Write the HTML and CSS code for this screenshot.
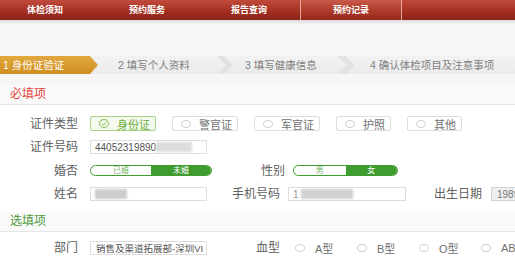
FILE: index.html
```html
<!DOCTYPE html>
<html>
<head>
  <title>预约记录</title>
  <link rel="stylesheet" href="styles.css">
</head>

<body>
  <div class="nav">
    <div class="nav-tabs">
      <a class="tab">体检须知</a>
      <a class="tab">预约服务</a>
      <a class="tab">报告查询</a>
      <a class="tab active">预约记录</a>
    </div>
  </div>
  <div class="nav-shade"></div>

  <div class="steps-wrap">
    <div class="steps">
      <div class="step step-current">1 身份证验证</div>
      <div class="step step-2">2 填写个人资料</div>
      <svg class="chevron" width="16" height="18" viewBox="0 0 16 18"><polygon points="0,0 7,0 16,9 7,18 0,18 9,9" fill="#e2e2e2"/></svg>
      <div class="step step-3">3 填写健康信息</div>
      <svg class="chevron" width="18" height="18" viewBox="0 0 18 18"><polygon points="0,0 8,0 18,9 8,18 0,18 10,9" fill="#e2e2e2"/></svg>
      <div class="step step-4">4 确认体检项目及注意事项</div>
    </div>
  </div>

  <div class="section-head required">必填项</div>
  <div class="form">
    <div class="row">
      <span class="lbl">证件类型</span>
      <div class="choices">
        <span class="choice checked">
          <svg class="icon" width="10" height="9" viewBox="0 0 10 9"><ellipse cx="5" cy="4.5" rx="4.5" ry="4" fill="none" stroke="#80bb50"/><path d="M2.8 4.6l1.7 1.5 2.7-3" fill="none" stroke="#80bb50"/></svg>身份证
        </span>
        <span class="choice"><i class="dot"></i>警官证</span>
        <span class="choice"><i class="dot"></i>军官证</span>
        <span class="choice"><i class="dot"></i>护照</span>
        <span class="choice"><i class="dot"></i>其他</span>
      </div>
    </div>
    <div class="row">
      <span class="lbl">证件号码</span>
      <div class="box box-std">44052319890<span class="blur blur-id"></span></div>
    </div>
    <div class="row">
      <span class="lbl">婚否</span>
      <div class="toggle toggle-wide"><span>已婚</span><span class="on">未婚</span></div>
      <span class="lbl lbl-mid">性别</span>
      <div class="toggle toggle-narrow"><span>男</span><span class="on">女</span></div>
    </div>
    <div class="row">
      <span class="lbl">姓名</span>
      <div class="box box-std"><span class="blur blur-name"></span></div>
      <span class="lbl lbl-mid">手机号码</span>
      <div class="box box-phone">1<span class="blur blur-phone"></span></div>
      <span class="lbl lbl-end">出生日期</span>
      <div class="box box-date">1989</div>
    </div>
  </div>

  <div class="section-head optional">选填项</div>
  <div class="form form-extra">
    <div class="row">
      <span class="lbl">部门</span>
      <div class="box box-std box-dept">销售及渠道拓展部-深圳VI</div>
      <span class="lbl lbl-mid">血型</span>
      <div class="radios">
        <span class="radio"><i class="dot"></i>A型</span>
        <span class="radio"><i class="dot"></i>B型</span>
        <span class="radio"><i class="dot"></i>O型</span>
        <span class="radio"><i class="dot"></i>AB</span>
      </div>
    </div>
  </div>
</body>
</html>
```

FILE: styles.css
```css
* {
  box-sizing: border-box;
}

html,
body {
  overflow: hidden;
}

body {
  margin: 0;
  width: 515px;
  background: #fff;
  font-family: "Liberation Sans", "Noto Sans CJK SC", sans-serif;
  color: #555;
}

.nav {
  height: 20px;
  background: linear-gradient(#c04a3c, #a52f21 55%, #8b2417);
  overflow: hidden;
}

.nav-tabs {
  display: flex;
  margin-left: -6px;
}

.tab {
  flex: none;
  width: 102px;
  height: 20px;
  line-height: 20px;
  text-align: center;
  font-size: 9px;
  font-weight: bold;
  color: #fff;
}

.tab.active {
  background: linear-gradient(#c95a4c, #ab3728 60%, #922a1c);
  border-left: 1px solid #e2a69d;
  border-right: 1px solid #e2a69d;
}

.nav-shade {
  height: 4px;
  background: linear-gradient(#dadada, #f3f3f3);
}

.steps-wrap {
  padding: 32px 0 11px;
  background: #f6f6f6;
}

.steps {
  display: flex;
  align-items: center;
  height: 18px;
  font-size: 10.5px;
  line-height: 18px;
  color: #808080;
  background: linear-gradient(#f2f2f2, #ebebeb);
}

.step {
  flex: none;
  white-space: nowrap;
}

.step-current {
  width: 98px;
  padding-left: 3px;
  color: #fff;
  background: linear-gradient(#e2a83e, #cf8f21);
  clip-path: polygon(0 0, 90px 0, 98px 50%, 90px 100%, 0 100%);
}

.step-2 {
  width: 99px;
  margin-left: 20px;
}

.step-3 {
  width: 92px;
  margin-left: 12px;
}

.step-4 {
  margin-left: 15px;
}

.chevron {
  flex: none;
  display: block;
}

.section-head {
  height: 20px;
  padding-left: 10px;
  line-height: 19px;
  font-size: 12px;
  background: #fafafa;
  border-bottom: 1px solid #e6e6e6;
}

.required {
  color: #e2443b;
}

.optional {
  color: #4c9b3a;
}

.form {
  padding: 7px 0 6px;
}

.form-extra {
  padding: 4px 0 0;
}

.row {
  display: flex;
  align-items: center;
  height: 23.5px;
  white-space: nowrap;
}

.row > * {
  flex: none;
}

.lbl {
  width: 78px;
  margin-right: 12px;
  text-align: right;
  font-size: 12px;
  line-height: 14px;
  color: #606060;
}

.lbl-mid {
  width: 73px;
  margin-right: 8px;
}

.lbl-end {
  width: 76px;
  margin-right: 9px;
}

.choices {
  display: flex;
  gap: 16px;
}

.choice {
  display: flex;
  align-items: center;
  gap: 8px;
  height: 15px;
  padding: 0 5px 0 8px;
  font-size: 11px;
  color: #707070;
  background: #fff;
  border: 1px solid #ddd;
  border-radius: 2px;
}

.choice.checked {
  color: #6aac3b;
  background: #f5faee;
  border-color: #a8d283;
}

.icon {
  display: block;
}

.dot {
  display: block;
  width: 10px;
  height: 8px;
  border: 1px solid #cfcfcf;
  border-radius: 50%;
}

.box {
  display: flex;
  align-items: center;
  height: 14px;
  padding: 0 4px;
  overflow: hidden;
  font-size: 10px;
  color: #555;
  background: #fff;
  border: 1px solid #ddd;
}

.box-std {
  width: 117px;
}

.box-dept {
  padding-left: 5px;
  font-size: 9.5px;
}

.box-phone {
  width: 118px;
  color: #999;
}

.box-date {
  width: 40px;
  padding-left: 5px;
  color: #777;
  background: #eee;
  border-color: #d2d2d2;
}

.blur {
  display: block;
  height: 10px;
  background: #d6d6d6;
  filter: blur(1px);
}

.blur-id {
  width: 36px;
  background: #dcdcdc;
}

.blur-name {
  width: 32px;
  background: #cdcdcd;
}

.blur-phone {
  width: 52px;
  margin-left: 2px;
  background: #d2d2d2;
}

.toggle {
  display: flex;
  height: 11px;
  overflow: hidden;
  font-size: 8px;
  line-height: 9px;
  border: 1px solid #3f9c2f;
  border-radius: 6px;
}

.toggle span {
  flex: 1;
  text-align: center;
  color: #79b86a;
}

.toggle .on {
  color: #fff;
  background: #3f9c2f;
}

.toggle-wide {
  width: 122px;
}

.toggle-narrow {
  width: 105px;
}

.radios {
  display: flex;
  padding-left: 7px;
}

.radio {
  display: flex;
  align-items: center;
  gap: 10px;
  width: 62px;
  font-size: 11px;
  color: #707070;
}
```
